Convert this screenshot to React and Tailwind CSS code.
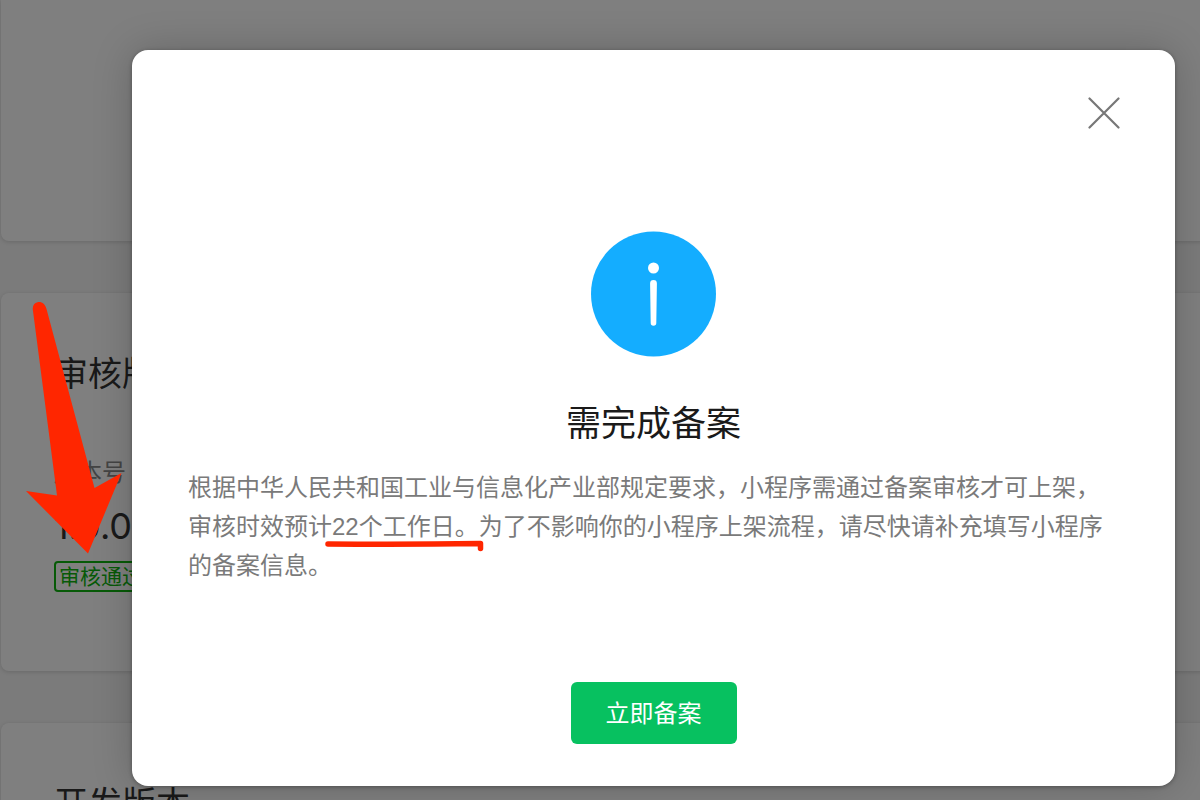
function VersionCard({ title, version, status }) {
  return (
    <section className="min-h-[378px] rounded-lg bg-white px-[53px] pt-14 shadow-[0_1px_4px_rgba(0,0,0,0.15)]">
      <h2 className="text-[34px] leading-[50px] text-[#333]">{title}</h2>
      {version && (
        <dl className="mt-[54px]">
          <dt className="text-2xl leading-[40px] text-[#888]">版本号</dt>
          <dd className="mt-2 font-['Inter',sans-serif] text-4xl leading-[50px] text-[#333]">{version}</dd>
        </dl>
      )}
      {status && (
        <span className="mt-[10px] inline-block rounded-sm border-2 border-[#0eb40e] px-[3px] text-[21px] leading-[27px] text-[#0eb40e]">
          {status}
        </span>
      )}
    </section>
  );
}

function InfoIcon() {
  return (
    <svg className="size-[126px]" viewBox="0 0 126 126" aria-hidden="true">
      <circle cx="62.5" cy="63" r="62.5" fill="#14adff" />
      <circle cx="62.5" cy="37" r="5.5" fill="#fff" />
      <path d="M59.1 52.5a3.4 3.4 0 0 1 6.8 0L65.3 92a2.8 2.8 0 0 1-5.6 0z" fill="#fff" />
    </svg>
  );
}

function ArrowMark() {
  return (
    <svg
      className="pointer-events-none absolute left-[26px] top-[302px] h-[252px] w-24"
      viewBox="0 0 96 252"
      aria-hidden="true"
    >
      <path
        d="M7 9C6 4 8 1 11.500 0.200C16 -0.500 19 2 20.500 7L68.500 186L95.500 171L62 251.500L0 189L31 193.500Z"
        fill="#ff2600"
      />
    </svg>
  );
}

function Underlined({ children }) {
  return (
    <span className="relative whitespace-nowrap">
      {children}
      <svg
        className="pointer-events-none absolute -bottom-3 -left-2 h-3 w-40"
        viewBox="0 0 160 12"
        fill="none"
        stroke="#ff2600"
        strokeWidth="5.5"
        strokeLinecap="round"
        strokeLinejoin="round"
        aria-hidden="true"
      >
        <path d="M4 4C50 4.500 100 4.500 156.500 3.500V8.500" />
      </svg>
    </span>
  );
}

function FilingDialog() {
  return (
    <div
      role="dialog"
      aria-modal="true"
      aria-labelledby="filing-title"
      className="flex w-full flex-col rounded-2xl bg-white px-14 pb-[42px] pt-[47px] shadow-[0_0_40px_rgba(0,0,0,0.2),0_1px_4px_rgba(0,0,0,0.3)]"
    >
      <button type="button" aria-label="关闭" className="-mr-px self-end">
        <svg className="size-8" viewBox="0 0 32 32" fill="none" stroke="#777" strokeWidth="2.2" strokeLinecap="round">
          <path d="M1.500 1.500l29 29M30.500 1.500l-29 29" />
        </svg>
      </button>
      <div className="mt-[102px] flex flex-col items-center">
        <InfoIcon />
        <h1 id="filing-title" className="mt-[42px] text-[35px] leading-[50px] text-[#1a1a1a]">
          需完成备案
        </h1>
      </div>
      <p className="mt-[19px] text-2xl leading-[39px] text-[#7a7a7a]">
        根据中华人民共和国工业与信息化产业部规定要求，小程序需通过备案审核才可上架，审核时效预计
        <Underlined>22个工作日。</Underlined>
        为了不影响你的小程序上架流程，请尽快请补充填写小程序的备案信息。
      </p>
      <button
        type="button"
        className="mt-[97px] self-center rounded-md bg-[#07c160] px-[35px] pb-[11px] pt-[13px] text-2xl leading-[38px] text-white"
      >
        立即备案
      </button>
    </div>
  );
}

export default function App() {
  return (
    <div className="relative h-screen overflow-hidden bg-[#f6f6f6] font-['Liberation_Sans','Noto_Sans_CJK_SC',sans-serif]">
      <main className="flex flex-col gap-[52px] pl-px">
        <section className="-mr-2 h-[241px] rounded-b-lg bg-white shadow-[0_1px_4px_rgba(0,0,0,0.15)]" />
        <div className="-mr-2 flex flex-col gap-[52px]">
          <VersionCard title="审核版本" version="1.0.0" status="审核通过" />
          <VersionCard title="开发版本" />
        </div>
      </main>
      <div className="absolute inset-0 flex items-start bg-black/50 pl-[132px] pr-[25px] pt-[50px]">
        <FilingDialog />
      </div>
      <ArrowMark />
    </div>
  );
}
